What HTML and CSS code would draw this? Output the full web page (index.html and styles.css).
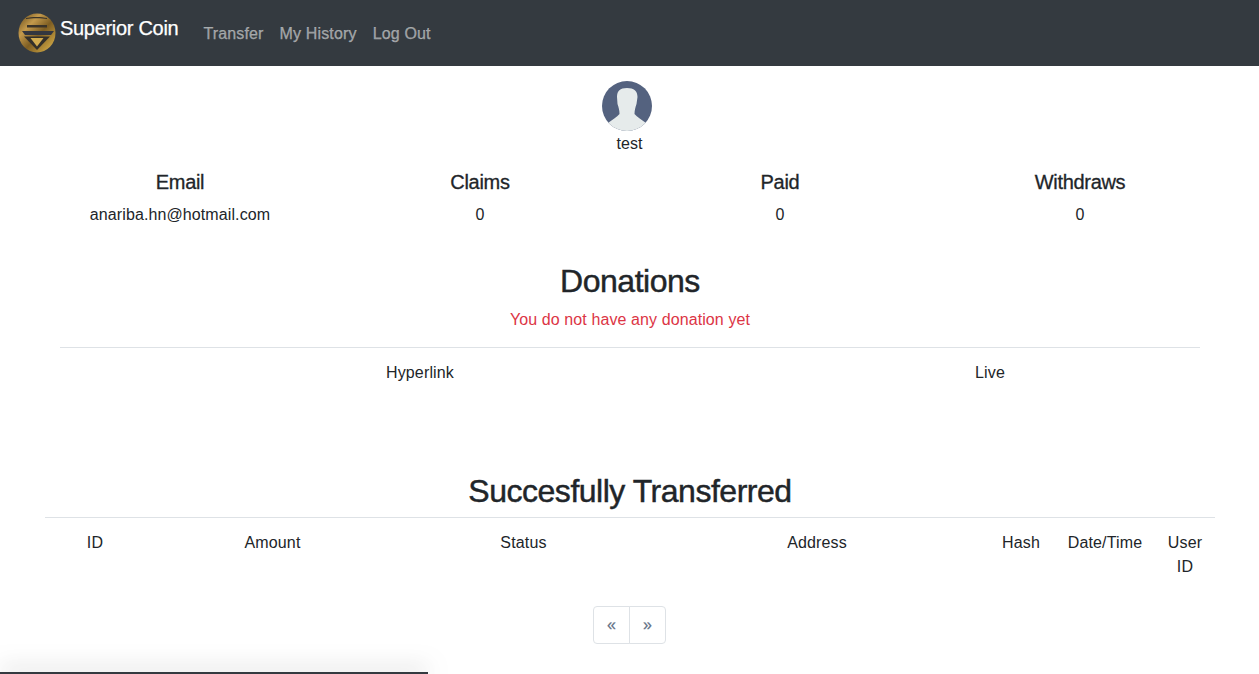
FILE: index.html
```html
<!DOCTYPE html>
<html lang="en">
<head>
<meta charset="utf-8">
<title>Superior Coin</title>
<link rel="stylesheet" href="styles.css">
</head>
<body>
<nav class="navbar">
  <a class="brand" href="#">
    <svg class="logo" viewBox="0 0 38 40" aria-hidden="true">
      <defs>
        <linearGradient id="gold" x1="0" y1="0" x2="1" y2="1">
          <stop offset="0" stop-color="#5f4516"/>
          <stop offset="0.3" stop-color="#c49a4c"/>
          <stop offset="0.55" stop-color="#7d5d22"/>
          <stop offset="0.8" stop-color="#b8923a"/>
          <stop offset="1" stop-color="#e0bd5e"/>
        </linearGradient>
        <clipPath id="coin"><ellipse cx="19" cy="20" rx="18.500" ry="19.500"/></clipPath>
      </defs>
      <ellipse cx="19" cy="20" rx="18.500" ry="19.500" fill="url(#gold)"/>
      <g clip-path="url(#coin)">
        <path d="M8 5 C13 3.500 24 3.500 29 5 L29 6 C24 5 13 5 8 6 Z" fill="#3a3328"/>
        <path d="M9 12 H29 V14.500 H9 Z" fill="#3a3328"/>
        <path d="M4 18 H36 L33 22 H7 Z" fill="#33373f"/>
        <path d="M6 23.500 H32 L19 37 Z" fill="#33302a"/>
        <path d="M12.500 25 H25.500 L19 33.500 Z" fill="#d3ad50"/>
      </g>
    </svg>
    <span class="brand-name">Superior Coin</span>
  </a>
  <ul class="nav">
    <li><a href="#">Transfer</a></li>
    <li><a href="#">My History</a></li>
    <li><a href="#">Log Out</a></li>
  </ul>
</nav>

<main>
  <section class="profile">
    <svg class="avatar" viewBox="0 0 50 50" aria-hidden="true">
      <defs><clipPath id="round"><circle cx="25" cy="25" r="25"/></clipPath></defs>
      <g clip-path="url(#round)">
        <rect width="50" height="50" fill="#54627f"/>
        <path d="M25 7 C18 7 15 10 15 16 L15.500 23 C16.500 26 17.500 29 17.500 33 C15 36 10 39 6 42 L6 50 L44 50 L44 42 C40 39 35 36 32.500 33 C32.500 29 33.500 26 34.500 23 L35.500 16 C35.500 10 32 7 25 7 Z" fill="#e6ebeb"/>
      </g>
    </svg>
    <div class="username">test</div>
  </section>

  <section class="stats">
    <div class="stat"><h5>Email</h5><p>anariba.hn@hotmail.com</p></div>
    <div class="stat"><h5>Claims</h5><p>0</p></div>
    <div class="stat"><h5>Paid</h5><p>0</p></div>
    <div class="stat"><h5>Withdraws</h5><p>0</p></div>
  </section>

  <section class="donations">
    <h2>Donations</h2>
    <p class="empty">You do not have any donation yet</p>
    <table class="table-donations">
      <thead><tr><th class="c-link">Hyperlink</th><th class="c-live">Live</th></tr></thead>
    </table>
  </section>

  <section class="transfers">
    <h2>Succesfully Transferred</h2>
    <table class="table-transfers">
      <thead>
        <tr>
          <th class="c-id">ID</th>
          <th class="c-amount">Amount</th>
          <th class="c-status">Status</th>
          <th class="c-address">Address</th>
          <th class="c-hash">Hash</th>
          <th class="c-date">Date/Time</th>
          <th class="c-user">User ID</th>
        </tr>
      </thead>
    </table>
  </section>

  <ul class="pagination">
    <li><a href="#">«</a></li>
    <li><a href="#">»</a></li>
  </ul>
</main>

<div class="bottom-bar"></div>
</body>
</html>
```

FILE: styles.css
```css
* { box-sizing: border-box; }

html, body { height: 100%; }

body {
  margin: 0;
  overflow: hidden;
  background: #fff;
  color: #212529;
  font-family: "Liberation Sans", Arial, sans-serif;
  font-size: 16px;
  line-height: 24px;
  letter-spacing: 0.1px;
}

a { text-decoration: none; }

.navbar {
  display: flex;
  align-items: center;
  height: 66px;
  padding: 2px 16px 0 18px;
  background: #343a40;
}

.brand {
  display: flex;
  align-items: flex-start;
  margin: -2px 25px 0 0;
  color: #fff;
  font-size: 20px;
  letter-spacing: -0.3px;
  -webkit-text-stroke: 0.25px #fff;
}

.logo {
  display: block;
  width: 38px;
  height: 40px;
  margin-right: 4px;
}

.brand-name {
  line-height: 30px;
}

.nav {
  display: flex;
  gap: 16px;
  margin: 0;
  padding: 0;
  list-style: none;
  letter-spacing: 0.15px;
}

.nav a {
  color: rgba(255, 255, 255, 0.5);
  -webkit-text-stroke: 0.25px rgba(255, 255, 255, 0.5);
}

main {
  display: flex;
  flex-direction: column;
}

.profile {
  display: flex;
  flex-direction: column;
  align-items: center;
  padding-top: 15px;
}

.avatar {
  display: block;
  width: 50px;
  height: 50px;
  margin-right: 6px;
}

.username {
  margin-top: 1px;
}

.stats {
  display: grid;
  grid-template-columns: repeat(4, 300px);
  margin: 14px 0 0 30px;
  text-align: center;
}

h5 {
  margin: 0 0 9px;
  font-size: 20px;
  font-weight: 400;
  line-height: 24px;
  letter-spacing: -0.3px;
  -webkit-text-stroke: 0.3px #212529;
}

.stat p {
  margin: 0;
}

h2 {
  margin: 0;
  font-size: 32px;
  font-weight: 400;
  line-height: 38px;
  letter-spacing: -0.48px;
  text-align: center;
  -webkit-text-stroke: 0.45px #212529;
}

.donations {
  margin: 0 59px 0 60px;
  padding-top: 35px;
}

.empty {
  margin: 8px 0 15px;
  color: #dc3545;
  text-align: center;
}

table {
  width: 100%;
  border-collapse: collapse;
  table-layout: fixed;
}

th {
  padding: 13px 12px 12px;
  font-weight: 400;
  letter-spacing: 0.15px;
  text-align: center;
  vertical-align: top;
}

.table-donations {
  border-top: 1px solid #dee2e6;
}

.c-link { width: 720px; }

.transfers {
  margin: 0 44px 0 45px;
  padding-top: 75px;
}

.table-transfers {
  margin-top: 7px;
  border-top: 1px solid #dee2e6;
}

.c-id { width: 100px; }
.c-amount { width: 255px; }
.c-status { width: 247px; }
.c-address { width: 340px; }
th.c-hash { width: 68px; padding-left: 0; padding-right: 0; }
th.c-date { width: 100px; padding-left: 0; padding-right: 0; }
.c-user { width: 60px; }

.pagination {
  display: flex;
  align-self: center;
  margin: 15px 0 0;
  padding: 0;
  list-style: none;
}

.pagination a {
  display: block;
  height: 38px;
  padding: 6px 13px;
  border: 1px solid #dee2e6;
  color: #5f6f85;
  -webkit-text-stroke: 0.25px #5f6f85;
}

.pagination li:first-child a {
  border-radius: 4px 0 0 4px;
}

.pagination li:last-child a {
  margin-left: -1px;
  border-radius: 0 4px 4px 0;
}

.bottom-bar {
  position: fixed;
  left: 0;
  bottom: 0;
  width: 428px;
  height: 2px;
  background: #343a40;
  box-shadow: 0 -2px 22px rgba(0, 0, 0, 0.6);
}
```
